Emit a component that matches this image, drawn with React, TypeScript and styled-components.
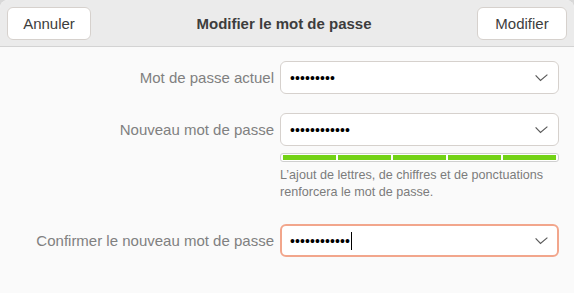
import React from 'react';
import styled, { createGlobalStyle } from 'styled-components';

const GlobalStyle = createGlobalStyle`
  html, body {
    margin: 0;
    padding: 0;
    background: #d8d8d8;
  }
  #root {
    width: 574px;
    height: 293px;
  }
`;

const Window = styled.div`
  width: 574px;
  height: 293px;
  background: #fafafa;
  border-radius: 8px 8px 0 0;
  overflow: hidden;
  font-family: 'Liberation Sans', Arial, sans-serif;
  color: #3d3d3d;
  display: flex;
  flex-direction: column;
`;

const HeaderBar = styled.div`
  height: 46px;
  flex: none;
  background: #ebebeb;
  border-bottom: 1px solid #d3d3d3;
  display: flex;
  align-items: center;
  justify-content: space-between;
  padding: 0 7px;
`;

const Title = styled.div`
  font-weight: bold;
  font-size: 15px;
  color: #3d3d3d;
`;

const HeaderButton = styled.button<{ $width: number }>`
  width: ${p => p.$width}px;
  height: 33px;
  background: #ffffff;
  border: 1px solid #d6d1cd;
  border-radius: 6px;
  font-family: inherit;
  font-size: 15px;
  color: #3d3d3d;
  padding: 0;
  margin-top: 0;
`;

const Form = styled.div`
  display: flex;
  flex-direction: column;
  padding: 14px 15px 0 0;
`;

const FieldRow = styled.div<{ $gap: number }>`
  display: grid;
  grid-template-columns: 1fr 279px;
  column-gap: 6px;
  align-items: start;
  margin-top: ${p => p.$gap}px;
`;

const Label = styled.label`
  text-align: right;
  font-size: 15px;
  line-height: 33px;
  color: #808080;
  white-space: nowrap;
`;

const FieldColumn = styled.div`
  display: flex;
  flex-direction: column;
`;

const Entry = styled.div<{ $focused?: boolean }>`
  height: 33px;
  box-sizing: border-box;
  background: #ffffff;
  border: ${p => (p.$focused ? '2px solid #f2a68c' : '1px solid #d6d1cd')};
  border-radius: 6px;
  display: flex;
  align-items: center;
  padding: 0 ${p => (p.$focused ? 9 : 10)}px 0 ${p => (p.$focused ? 8 : 9)}px;
`;

const Dots = styled.span`
  font-family: 'Liberation Sans', Arial, sans-serif;
  font-size: 14px;
  letter-spacing: 0.1px;
  color: #000;
  line-height: 1;
`;

const Caret = styled.span`
  width: 1px;
  height: 18px;
  background: #000;
  margin-left: 1px;
`;

const Spacer = styled.span`
  flex: 1;
`;

const LevelBar = styled.div`
  margin-top: 7px;
  height: 9px;
  box-sizing: border-box;
  border: 1px solid #cfcfcf;
  border-radius: 3px;
  background: #ffffff;
  padding: 1px 2px;
  display: grid;
  grid-template-columns: repeat(5, 1fr);
  column-gap: 2px;
`;

const LevelBlock = styled.div`
  background: #73d216;
  height: 5px;
`;

const Hint = styled.div`
  margin-top: 5px;
  font-size: 12.6px;
  line-height: 17px;
  color: #7c7c7c;
`;

const Check = () => (
  <svg width="13" height="8" viewBox="0 0 13 8">
    <polyline points="0.6,1.4 5.5,6.4 12.4,0.6" fill="none" stroke="#5a5a5a" strokeWidth="1.2" />
  </svg>
);

const PasswordEntry = ({ count, focused }: { count: number; focused?: boolean }) => (
  <Entry $focused={focused}>
    <Dots>{'•'.repeat(count)}</Dots>
    {focused && <Caret />}
    <Spacer />
    <Check />
  </Entry>
);

export default function App() {
  return (
    <>
      <GlobalStyle />
      <Window>
        <HeaderBar>
          <HeaderButton $width={84}>Annuler</HeaderButton>
          <Title>Modifier le mot de passe</Title>
          <HeaderButton $width={90}>Modifier</HeaderButton>
        </HeaderBar>
        <Form>
          <FieldRow $gap={0}>
            <Label>Mot de passe actuel</Label>
            <PasswordEntry count={9} />
          </FieldRow>
          <FieldRow $gap={19}>
            <Label>Nouveau mot de passe</Label>
            <FieldColumn>
              <PasswordEntry count={12} />
              <LevelBar>
                {[0, 1, 2, 3, 4].map(i => (
                  <LevelBlock key={i} />
                ))}
              </LevelBar>
              <Hint>
                L’ajout de lettres, de chiffres et de ponctuations
                <br />
                renforcera le mot de passe.
              </Hint>
            </FieldColumn>
          </FieldRow>
          <FieldRow $gap={23}>
            <Label>Confirmer le nouveau mot de passe</Label>
            <PasswordEntry count={12} focused />
          </FieldRow>
        </Form>
      </Window>
    </>
  );
}
